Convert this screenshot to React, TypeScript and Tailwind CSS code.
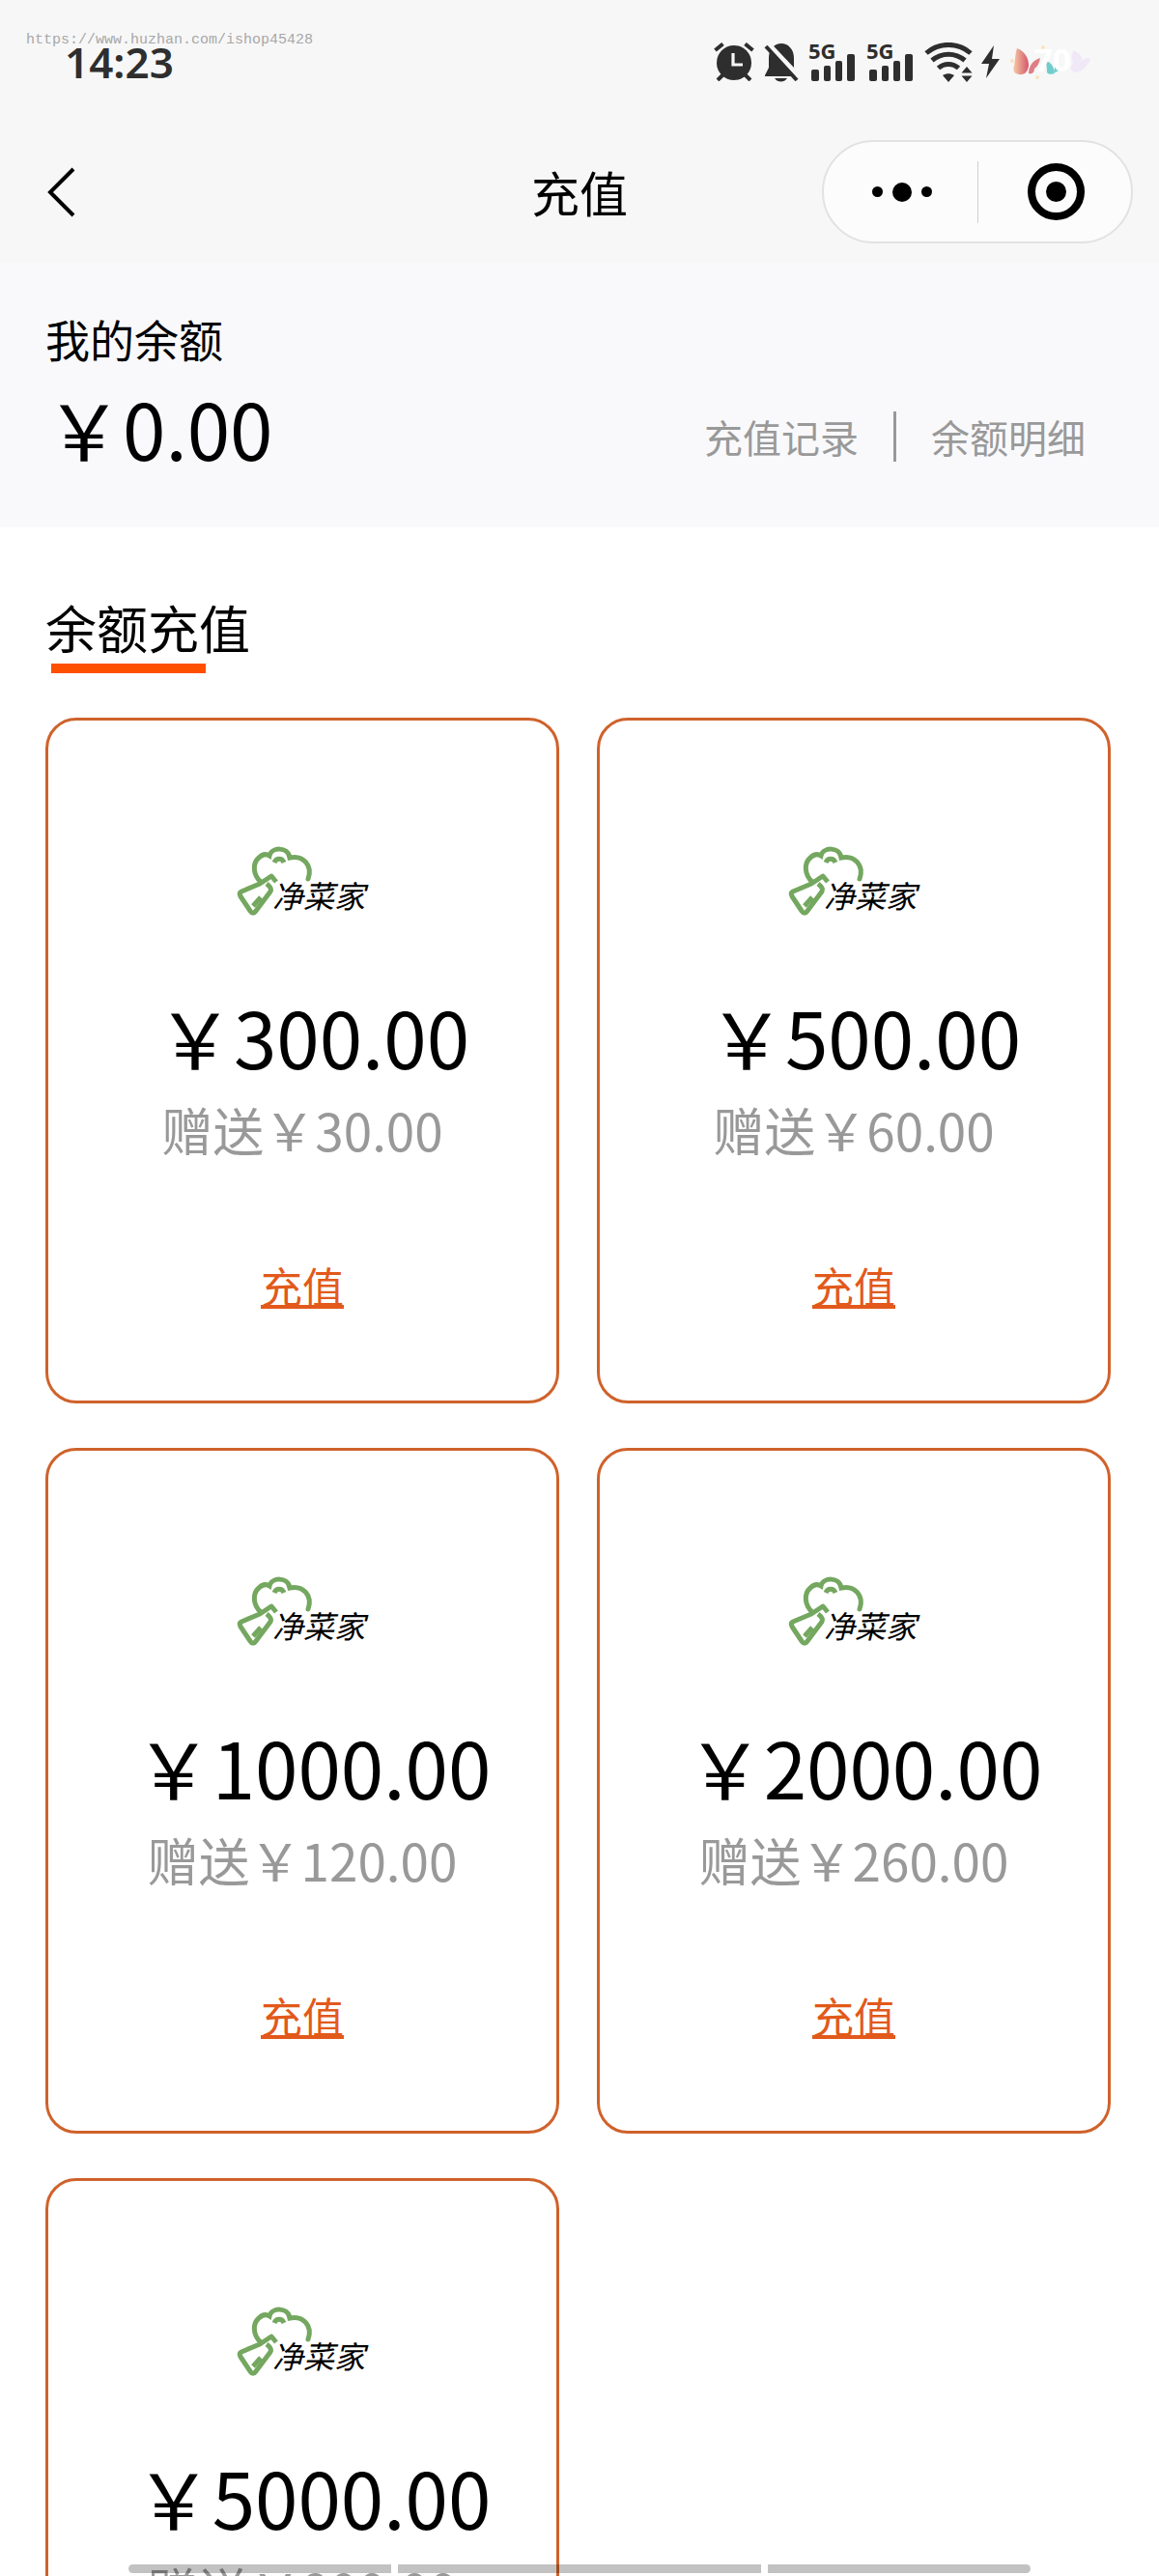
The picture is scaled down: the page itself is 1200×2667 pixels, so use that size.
import React from 'react';

const plans = [
  { price: '300.00', bonus: '30.00' },
  { price: '500.00', bonus: '60.00' },
  { price: '1000.00', bonus: '120.00' },
  { price: '2000.00', bonus: '260.00' },
  { price: '5000.00', bonus: '800.00' },
];

function AlarmIcon() {
  return (
    <svg width="42" height="40" viewBox="0 0 42 40" fill="none">
      <circle cx="21" cy="21" r="18" fill="#2e2e2e" />
      <path d="M1.500 8l8-6.500M40.500 8l-8-6.500M4 39l6-6M38 39l-6-6" stroke="#2e2e2e" strokeWidth="4" />
      <path d="M20 11v12h10" stroke="#f7f7f7" strokeWidth="3.200" />
    </svg>
  );
}

function MutedBellIcon() {
  return (
    <svg width="36" height="41" viewBox="0 0 36 41" fill="none">
      <path d="M5 16C5 7 11 1 18 1s13 6 13 15v10l4 8v1H1v-1l4-8z" fill="#2e2e2e" />
      <path d="M11 37h13c-1.500 2.500-4 3.500-6.500 3.500S12.500 39.500 11 37z" fill="#2e2e2e" />
      <path d="M4 1l32 34" stroke="#f7f7f7" strokeWidth="5" />
      <path d="M2 4l32 35" stroke="#2e2e2e" strokeWidth="4" />
    </svg>
  );
}

function Signal() {
  return (
    <div className="relative h-10 w-12">
      <span className="absolute top-0 left-0 font-['Noto_Sans'] text-[22px] leading-4 font-bold">5G</span>
      <svg width="48" height="40" viewBox="0 0 48 40" fill="#2e2e2e">
        <rect x="3" y="28" width="8" height="12" rx="2" />
        <rect x="16" y="24" width="7" height="16" rx="2" />
        <rect x="28" y="19" width="7" height="21" rx="2" />
        <rect x="40" y="12" width="8" height="28" rx="2" />
      </svg>
    </div>
  );
}

function WifiIcon() {
  return (
    <svg width="50" height="41" viewBox="0 0 50 41" fill="none" stroke="#2e2e2e" strokeWidth="5">
      <path d="M2 11c13-11.500 33-11.500 46 0M8 18.500c10-8.500 24-8.500 34 0M14.500 26.500c6-5.500 15-5.500 21 0" />
      <path d="M19 34c4-2.500 8-2.500 12 0l-6 7z" fill="#2e2e2e" stroke="none" />
      <path d="M44 25l5.500 6.500h-11zM44 41l5.500-6.500h-11z" fill="#2e2e2e" stroke="none" />
    </svg>
  );
}

function BatteryArt() {
  return (
    <svg width="90" height="44" viewBox="0 0 90 44">
      <defs>
        <linearGradient id="wing" x1="0" x2="1">
          <stop offset="0" stopColor="#f6cba4" />
          <stop offset="1" stopColor="#d4566a" />
        </linearGradient>
      </defs>
      <path d="M8 8c8 3 12 10 12 18-1 7-5 10-10 9-5-1-7-4-5-9 1-6 1-12 3-18z" fill="url(#wing)" />
      <path d="M20 34c0-8 5-14 12-16-1 6-3 9-6 11 0 4-2 6-6 5z" fill="#de7f86" />
      <path d="M37 21c6 1 9 5 10 13-5 2-9 0-8-3 0-4-1-7-2-10zM47 33c-1-5 1-7 4-9 2 4 1 8-4 9z" fill="#6fcdcd" />
      <path d="M67 10c6 3 9 7 8 11 3-3 6-4 9-2-3 8-9 14-16 14-6-2-5-7-2-9-2-5-2-9 1-14z" fill="#f1e8f7" />
      <circle cx="3" cy="21" r="2" fill="#fae3bd" />
      <circle cx="35" cy="7" r="2" fill="#fae3bd" />
      <circle cx="29" cy="38" r="2" fill="#fae3bd" />
      <text x="26" y="32" fill="#fff" fontFamily="Noto Sans" fontSize="33" fontWeight="700">70</text>
    </svg>
  );
}

function StatusBar() {
  return (
    <div className="relative flex h-[128px] items-center justify-between pr-[65px] pl-[67px] text-[#2e2e2e]">
      <span className="font-['Noto_Sans'] text-[44px] leading-none font-semibold">14:23</span>
      <span className="absolute top-[32px] left-[27px] font-['Liberation_Mono'] text-[15px] leading-5 text-[#a8a8a8]">
        https://www.huzhan.com/ishop45428
      </span>
      <div className="flex items-center">
        <AlarmIcon />
        <div className="ml-[10px]"><MutedBellIcon /></div>
        <div className="ml-[10px]"><Signal /></div>
        <div className="ml-3"><Signal /></div>
        <div className="ml-3"><WifiIcon /></div>
        <svg className="ml-2" width="22" height="36" viewBox="0 0 22 36" fill="#2e2e2e">
          <path d="M14 1L1 20h8L6 35l14-20h-8z" />
        </svg>
        <div className="ml-2"><BatteryArt /></div>
      </div>
    </div>
  );
}

function NavBar() {
  return (
    <header className="grid h-[144px] grid-cols-3 items-start px-[27px] pt-[17px]">
      <button aria-label="返回" className="flex h-[107px] items-center pl-[21px]">
        <svg width="32" height="52" viewBox="0 0 32 52" fill="none" stroke="#000" strokeWidth="4">
          <path d="M28 2L4 26l24 24" />
        </svg>
      </button>
      <h1 className="text-center text-[50px] leading-[107px]">充值</h1>
      <div className="flex h-[107px] w-[322px] items-center justify-self-end rounded-full border-2 border-[#e2e2e2] bg-[#fcfcfc]">
        <button aria-label="更多" className="flex flex-1 items-center justify-center gap-[10px] pl-1">
          <span className="size-[11px] rounded-full bg-black" />
          <span className="size-5 rounded-full bg-black" />
          <span className="size-[11px] rounded-full bg-black" />
        </button>
        <span className="h-16 w-px bg-[#cfcfcf]" />
        <button aria-label="关闭" className="flex flex-1 items-center justify-center pl-1">
          <span className="flex size-[59px] items-center justify-center rounded-full border-8 border-black">
            <span className="size-[21px] rounded-full bg-black" />
          </span>
        </button>
      </div>
    </header>
  );
}

function BrandLogo() {
  return (
    <svg width="190" height="120" viewBox="0 0 190 120" role="img" aria-label="净菜家">
      <g fill="none" stroke="#74a75f" strokeWidth="5">
        <path d="M52 64C44 57 43 45 50 39c4-4 8-4 11-2 2-9 19-10 21 2 14-3 24 8 19 22" strokeLinecap="round" />
        <path d="M66 44c2-5 8-5 10 0" />
        <path d="M68 64l-5-6-12 8-19 8c-2 1-2 3-1 5l10 15c2 3 4 3 6 0l15-20c1-2 0-5-4-8" strokeLinejoin="round" />
        <path d="M52 80l-8 9" />
      </g>
      <text
        x="64"
        y="91"
        fontFamily="Noto Sans CJK SC, sans-serif"
        fontSize="32"
        fontStyle="italic"
        fontWeight="400"
      >
        净菜家
      </text>
    </svg>
  );
}

function PlanCard({ price, bonus }: { price: string; bonus: string }) {
  return (
    <article className="flex h-[710px] flex-col items-center rounded-[32px] border-3 border-[#cf622b] pt-[103px]">
      <BrandLogo />
      <div className="mt-[43px] pl-[22px] text-[80px] leading-[120px]">￥{price}</div>
      <div className="text-[53px] leading-[74px] text-[#999]">赠送￥{bonus}</div>
      <button className="mt-[88px] text-[43px] leading-[72px] text-[#e2591b] underline decoration-4">充值</button>
    </article>
  );
}

function GestureBar() {
  return (
    <div className="fixed inset-x-0 bottom-[3px] flex h-[9px] gap-[7px] px-[133px]">
      <span className="flex-1 rounded-l-full bg-black/24" />
      <span className="w-[376px] bg-black/24" />
      <span className="flex-1 rounded-r-full bg-black/24" />
    </div>
  );
}

export default function App() {
  return (
    <div className="h-screen overflow-hidden bg-white font-['Noto_Sans_CJK_SC',sans-serif] text-black">
      <div className="bg-[#f7f7f7]">
        <StatusBar />
        <NavBar />
      </div>

      <section className="flex h-[274px] items-start justify-between bg-[#f9f9fc] pr-[76px] pl-[47px]">
        <div className="pt-[43px]">
          <h2 className="text-[46px] leading-[70px]">我的余额</h2>
          <div className="text-[80px] leading-[114px]">￥0.00</div>
        </div>
        <div className="flex items-center gap-9 pt-[148px] text-[40px] leading-[64px] text-[#999]">
          <a href="#records">充值记录</a>
          <span className="h-[52px] w-[3px] bg-[#999]" />
          <a href="#details">余额明细</a>
        </div>
      </section>

      <main className="pt-[66px] pr-[50px] pl-[47px]">
        <h2 className="text-[53px] leading-[75px]">余额充值</h2>
        <div className="ml-[6px] h-[10px] w-[160px] bg-[#ff5000]" />
        <div className="mt-[46px] grid grid-cols-2 gap-x-[39px] gap-y-[46px]">
          {plans.map((plan) => (
            <PlanCard key={plan.price} price={plan.price} bonus={plan.bonus} />
          ))}
        </div>
      </main>

      <GestureBar />
    </div>
  );
}
